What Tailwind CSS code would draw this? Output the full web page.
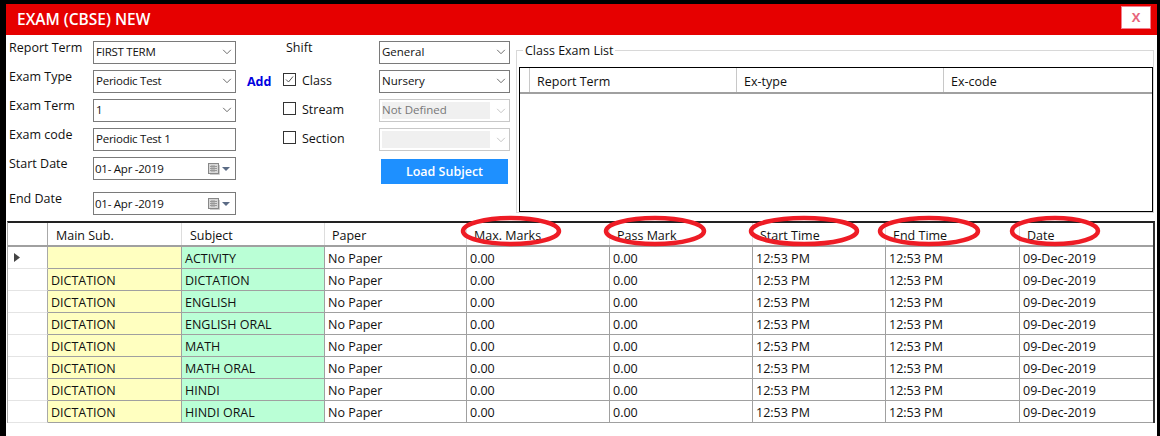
<!DOCTYPE html>
<html lang="en">
<head>
    <meta charset="UTF-8">
    <title>Exam (CBSE) New</title>
    <script src="https://cdn.jsdelivr.net/npm/@tailwindcss/browser@4"></script>
</head>
<body class="bg-white">
<div class="relative w-[1160px] h-[436px] overflow-hidden bg-white border-t-4 border-l-[6px] border-r-[3px] border-black font-['Open_Sans','Noto_Sans',sans-serif] text-[12.5px] text-[#111]">

    <!-- title -->
    <div class="h-[31px] bg-[#e60000] flex items-center justify-between pl-[11px] pr-[6px]">
        <span class="text-white text-[15.5px] font-semibold">EXAM (CBSE) NEW</span>
        <button class="-mt-[4px] w-[30px] h-[23px] bg-white border border-[#f08090] text-[#e8657c] text-[13px] font-bold flex items-center justify-center">X</button>
    </div>

    <div class="h-[186px] flex">
        <!-- left form -->
        <div class="w-[266px] pt-[6px] pl-[3px] flex flex-col">
            <div class="h-[29px] flex"><label class="w-[84px] -mt-[2px]">Report Term</label>
                <div class="w-[143px] h-[23px] border border-[#7a7a7a] flex items-center justify-between pl-[2px] pr-[3px] pb-[1px] text-[11.5px] tracking-[-0.25px]"><span>FIRST TERM</span><svg class="w-[10px] h-[6px]" viewBox="0 0 11 7" fill="none" stroke="#555"><path d="M1 1l4.5 4.5L10 1"/></svg></div>
            </div>
            <div class="h-[29px] flex"><label class="w-[84px] -mt-[2px]">Exam Type</label>
                <div class="w-[143px] h-[23px] border border-[#7a7a7a] flex items-center justify-between pl-[2px] pr-[3px] pb-[1px] text-[11.5px] tracking-[-0.25px]"><span>Periodic Test</span><svg class="w-[10px] h-[6px]" viewBox="0 0 11 7" fill="none" stroke="#555"><path d="M1 1l4.5 4.5L10 1"/></svg></div>
                <span class="ml-[11px] mt-[3px] font-bold text-[#0000e0] text-[12.5px]">Add</span>
            </div>
            <div class="h-[29px] flex"><label class="w-[84px] -mt-[2px]">Exam Term</label>
                <div class="w-[143px] h-[23px] border border-[#7a7a7a] flex items-center justify-between pl-[2px] pr-[3px] pb-[1px] text-[11.5px] tracking-[-0.25px]"><span>1</span><svg class="w-[10px] h-[6px]" viewBox="0 0 11 7" fill="none" stroke="#555"><path d="M1 1l4.5 4.5L10 1"/></svg></div>
            </div>
            <div class="h-[29px] flex"><label class="w-[84px] -mt-[2px]">Exam code</label>
                <div class="w-[143px] h-[23px] border border-[#7a7a7a] flex items-center pl-[2px] pb-[1px] text-[11.5px] tracking-[-0.25px]">Periodic Test 1</div>
            </div>
            <div class="h-[35px] flex"><label class="w-[84px] -mt-[2px]">Start Date</label>
                <div class="w-[143px] h-[23px] border border-[#7a7a7a] flex items-center justify-between pl-[1px] pr-[5px] text-[11.5px] tracking-[-0.25px]"><span>01- Apr -2019</span><span class="flex items-center gap-[2px]"><svg class="w-[12px] h-[12px]" viewBox="0 0 12 12"><rect x=".5" y=".5" width="10" height="10" fill="#d8d8d8" stroke="#888"/><path d="M2 3.500h7M2 5.500h7M2 7.500h7M4 2v7M6 2v7" stroke="#999"/><path d="M11.500 2v9.500H2" stroke="#ccc" fill="none"/></svg><svg class="w-[8px] h-[4px]" viewBox="0 0 8 4"><path d="M0 0h8L4 4z" fill="#5b6b85"/></svg></span></div>
            </div>
            <div class="h-[29px] flex"><label class="w-[84px] -mt-[2px]">End Date</label>
                <div class="w-[143px] h-[23px] border border-[#7a7a7a] flex items-center justify-between pl-[1px] pr-[5px] text-[11.5px] tracking-[-0.25px]"><span>01- Apr -2019</span><span class="flex items-center gap-[2px]"><svg class="w-[12px] h-[12px]" viewBox="0 0 12 12"><rect x=".5" y=".5" width="10" height="10" fill="#d8d8d8" stroke="#888"/><path d="M2 3.500h7M2 5.500h7M2 7.500h7M4 2v7M6 2v7" stroke="#999"/><path d="M11.500 2v9.500H2" stroke="#ccc" fill="none"/></svg><svg class="w-[8px] h-[4px]" viewBox="0 0 8 4"><path d="M0 0h8L4 4z" fill="#5b6b85"/></svg></span></div>
            </div>
        </div>

        <!-- shift / class column -->
        <div class="w-[96px] ml-[11px] pt-[6px] flex flex-col">
            <div class="h-[29px] pl-[3px] -mt-[2px] mb-[1px]">Shift</div>
            <div class="h-[29px] flex items-start gap-[6px] pt-[3px]">
                <svg class="w-[13px] h-[13px] mt-[1px]" viewBox="0 0 13 13" fill="none"><rect x=".5" y=".5" width="12" height="12" stroke="#333"/><path d="M3 6.500l2.500 2.500L10 3.500" stroke="#555"/></svg><span>Class</span>
            </div>
            <div class="h-[29px] flex items-start gap-[6px] pt-[3px]">
                <svg class="w-[13px] h-[13px] mt-[1px]" viewBox="0 0 13 13" fill="none"><rect x=".5" y=".5" width="12" height="12" stroke="#333"/></svg><span>Stream</span>
            </div>
            <div class="h-[29px] flex items-start gap-[6px] pt-[3px]">
                <svg class="w-[13px] h-[13px] mt-[1px]" viewBox="0 0 13 13" fill="none"><rect x=".5" y=".5" width="12" height="12" stroke="#333"/></svg><span>Section</span>
            </div>
        </div>

        <!-- shift / class selects -->
        <div class="w-[131px] pt-[6px] flex flex-col">
            <div class="h-[29px]"><div class="h-[23px] border border-[#7a7a7a] flex items-center justify-between pl-[2px] pr-[3px] pb-[1px] text-[11.5px]"><span>General</span><svg class="w-[10px] h-[6px]" viewBox="0 0 11 7" fill="none" stroke="#555"><path d="M1 1l4.5 4.5L10 1"/></svg></div></div>
            <div class="h-[29px]"><div class="h-[23px] border border-[#7a7a7a] flex items-center justify-between pl-[2px] pr-[3px] pb-[1px] text-[11.5px]"><span>Nursery</span><svg class="w-[10px] h-[6px]" viewBox="0 0 11 7" fill="none" stroke="#555"><path d="M1 1l4.5 4.5L10 1"/></svg></div></div>
            <div class="h-[29px]"><div class="h-[23px] border border-[#c8c8c8] flex items-center justify-between p-[2px] pr-[3px] text-[11.5px]"><span class="w-[108px] h-[17px] bg-[#f0f0f0] text-[#777] leading-[16px]">Not Defined</span><svg class="w-[10px] h-[6px]" viewBox="0 0 11 7" fill="none" stroke="#bbb"><path d="M1 1l4.5 4.5L10 1"/></svg></div></div>
            <div class="h-[31px]"><div class="h-[23px] border border-[#c8c8c8] flex items-center justify-between p-[2px] pr-[3px] text-[11.5px]"><span class="w-[108px] h-[17px] bg-[#f0f0f0]"></span><svg class="w-[10px] h-[6px]" viewBox="0 0 11 7" fill="none" stroke="#bbb"><path d="M1 1l4.5 4.5L10 1"/></svg></div></div>
            <button class="ml-[2px] w-[127px] h-[25px] pt-[2px] bg-[#1e90ff] text-white font-semibold text-[12.5px]">Load Subject</button>
        </div>

        <!-- class exam list -->
        <div class="relative w-[638px] h-[163px] ml-[6px] mt-[15px] border border-[#d8d8d8]">
            <span class="absolute left-[6px] -top-[9px] bg-white px-[2px] text-[12.5px]">Class Exam List</span>
            <div class="mt-[16px] ml-[2px] w-[634px] h-[145px] border border-black">
                <div class="h-[26px] flex border-b-2 border-[#a0a0a0] items-center">
                    <div class="w-[10px] h-full border-r border-[#c8c8c8]"></div>
                    <div class="w-[207px] h-full border-r border-[#c8c8c8] pl-[7px] leading-[27px]">Report Term</div>
                    <div class="w-[207px] h-full border-r border-[#c8c8c8] pl-[7px] leading-[27px]">Ex-type</div>
                    <div class="flex-1 h-full pl-[7px] leading-[27px]">Ex-code</div>
                </div>
            </div>
        </div>
    </div>

    <!-- subjects grid -->
    <div id="grid" class="ml-[1px] w-[1148px] border-t-2 border-r-2 border-l border-[#222] border-l-[#aaa] border-r-[#333]">
        <div class="flex h-[24px] leading-[26px] border-b-2 border-[#a0a0a0]">
            <div class="w-[40px] border-r border-[#a8a8a8]"></div>
            <div class="w-[134px] border-r border-[#ddd] pl-[8px]">Main Sub.</div>
            <div class="w-[143px] border-r border-[#ddd] pl-[8px]">Subject</div>
            <div class="w-[142px] border-r border-[#ddd] pl-[7px]">Paper</div>
            <div class="w-[143px] border-r border-[#ddd] pl-[7px]">Max. Marks</div>
            <div class="w-[143px] border-r border-[#ddd] pl-[7px]">Pass Mark</div>
            <div class="w-[133px] border-r border-[#ddd] pl-[7px]">Start Time</div>
            <div class="w-[134px] border-r border-[#ddd] pl-[7px]">End Time</div>
            <div class="flex-1 pl-[7px]">Date</div>
        </div>
    </div>

    <!-- red marker circles drawn over the header -->
    <svg class="absolute left-[-6px] top-[-4px] pointer-events-none" width="1160" height="436" fill="none" stroke="#ee1c25" stroke-width="4.500">
        <ellipse cx="511" cy="231" rx="48" ry="13"/>
        <ellipse cx="655" cy="231" rx="49" ry="13"/>
        <ellipse cx="804" cy="231" rx="53" ry="13"/>
        <ellipse cx="929" cy="231" rx="49" ry="13"/>
        <ellipse cx="1055" cy="231" rx="43" ry="13"/>
    </svg>
</div>

<script>
    // filas de la grilla
    const rows = [
        ['', 'ACTIVITY'], ['DICTATION', 'DICTATION'], ['DICTATION', 'ENGLISH'], ['DICTATION', 'ENGLISH ORAL'],
        ['DICTATION', 'MATH'], ['DICTATION', 'MATH ORAL'], ['DICTATION', 'HINDI'], ['DICTATION', 'HINDI ORAL']
    ];
    const grid = document.getElementById('grid');
    rows.forEach((r, i) => {
        const row = document.createElement('div');
        row.className = 'flex h-[22px] leading-[23px] text-[12.5px]';
        row.innerHTML = `
            <div class="w-[40px] border-r border-b border-[#a8a8a8] border-b-[#e4e4e4] flex items-center pl-[6px]">${i === 0 ? '<svg width="6" height="9" viewBox="0 0 6 9"><path d="M0 0l6 4.500-6 4.500z" fill="#444"/></svg>' : ''}</div>
            <div class="w-[134px] bg-[#ffffc0] border-r border-b border-[#a0a0a0] pl-[3px]">${r[0]}</div>
            <div class="w-[143px] bg-[#baffd6] border-r border-b border-[#a0a0a0] pl-[3px]">${r[1]}</div>
            <div class="w-[142px] border-r border-b border-[#a0a0a0] pl-[3px]">No Paper</div>
            <div class="w-[143px] border-r border-b border-[#a0a0a0] pl-[3px]">0.00</div>
            <div class="w-[143px] border-r border-b border-[#a0a0a0] pl-[3px]">0.00</div>
            <div class="w-[133px] border-r border-b border-[#a0a0a0] pl-[3px]">12:53 PM</div>
            <div class="w-[134px] border-r border-b border-[#a0a0a0] pl-[3px]">12:53 PM</div>
            <div class="flex-1 border-b border-[#a0a0a0] pl-[3px]">09-Dec-2019</div>`;
        grid.appendChild(row);
    });
</script>
</body>
</html>
